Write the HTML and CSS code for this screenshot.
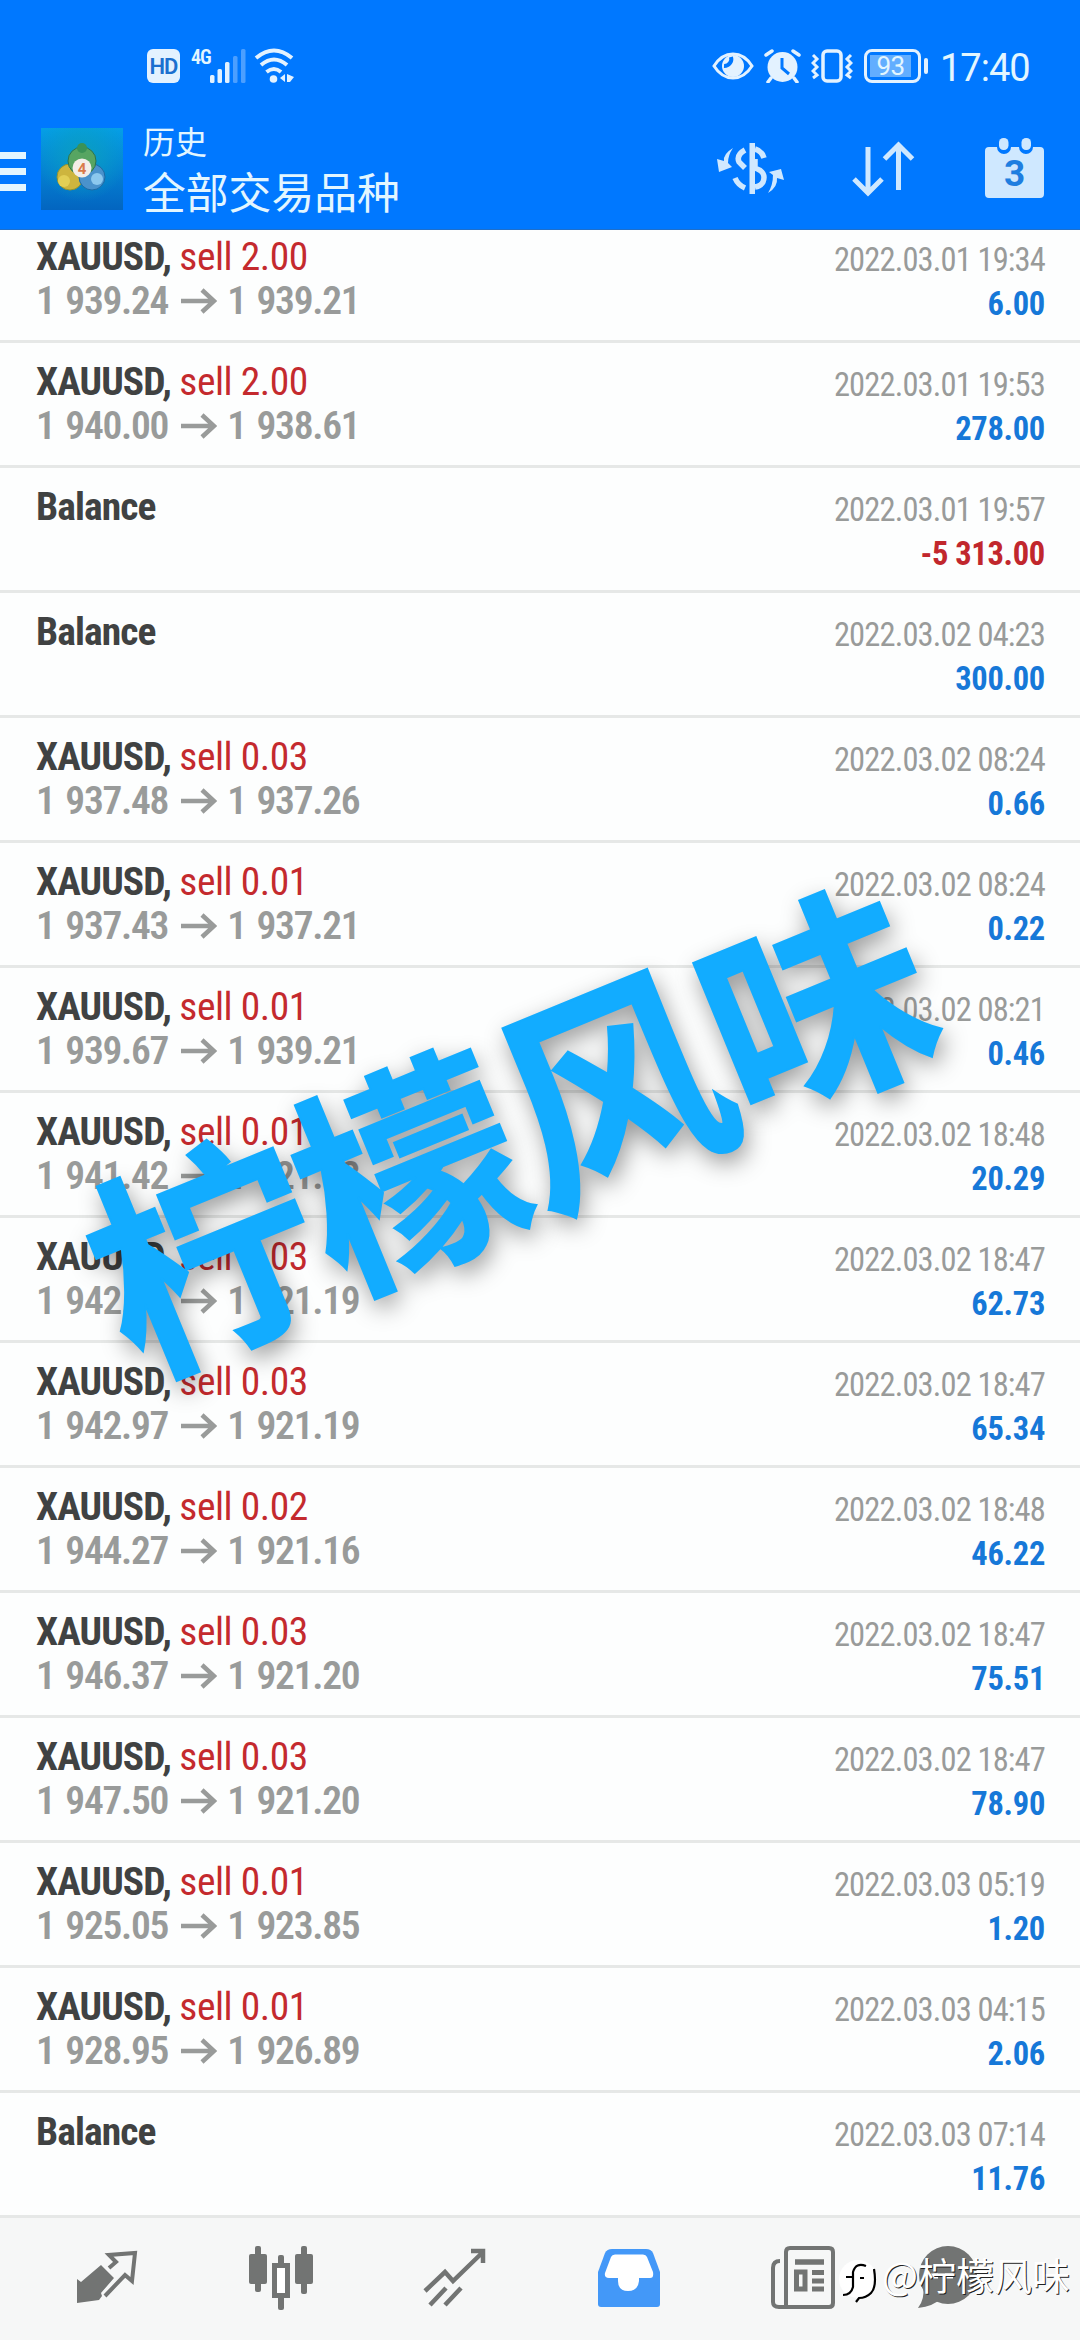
FILE: index.html
```html
<!DOCTYPE html>
<html lang="zh-CN">
<head>
<meta charset="utf-8">
<title>历史</title>
<link rel="stylesheet" href="styles.css">
</head>
<body>
<div class="screen">
  <header class="top">
    <div class="status">
      <div class="status-left">
        <span class="hd">HD</span>
        <span class="net">4G</span>
        <svg class="signal" width="36" height="34" viewBox="0 0 36 34"><g fill="#e3f2ff"><rect x="0" y="26" width="4.500" height="8" rx="1.500"/><rect x="7.500" y="20" width="4.500" height="14" rx="1.500"/><rect x="15" y="13" width="4.500" height="21" rx="1.500"/></g><g fill="#4c9fff"><rect x="23" y="7" width="4.500" height="27" rx="1.500"/><rect x="31" y="0" width="4.500" height="34" rx="1.500"/></g></svg>
        <svg class="wifi" width="42" height="36" viewBox="0 0 42 36"><g fill="none" stroke="#e3f2ff" stroke-width="4"><path d="M2 10Q20 -5 38 10"/><path d="M7 17Q20 6 33 17"/><path d="M12.500 24Q20 18 27 24"/></g><circle cx="19.500" cy="31" r="3.800" fill="#e3f2ff"/><path d="M26 30l5-4v8zM33 26l7 3-4 5h-3z" fill="#e3f2ff"/></svg>
      </div>
      <div class="status-right">
        <svg width="42" height="34" viewBox="0 0 42 34"><path d="M2 17C12 1 30 1 40 17C30 33 12 33 2 17Z" fill="none" stroke="#e3f2ff" stroke-width="3"/><circle cx="21" cy="17" r="11" fill="#e3f2ff"/><path d="M19 8a7 7 0 0 1-7 9" fill="none" stroke="#0078ff" stroke-width="4"/></svg>
        <svg width="37" height="34" viewBox="0 0 37 34"><circle cx="18.500" cy="18" r="15" fill="#e3f2ff"/><path d="M2 6l6-4M35 6l-6-4M7 29l-3 4M30 29l3 4" stroke="#e3f2ff" stroke-width="3.500" stroke-linecap="round"/><path d="M18 9v10l7 6" fill="none" stroke="#0078ff" stroke-width="3"/></svg>
        <svg width="42" height="34" viewBox="0 0 42 34"><rect x="12" y="2" width="18" height="30" rx="4" fill="none" stroke="#e3f2ff" stroke-width="3.500"/><path d="M2 6l4 4-4 4 4 4-4 4 4 4-4 3M40 6l-4 4 4 4-4 4 4 4-4 4 4 3" fill="none" stroke="#e3f2ff" stroke-width="3"/></svg>
        <span class="battery"><span class="level">93</span></span>
        <span class="clock">17:40</span>
      </div>
    </div>
    <div class="bar">
      <div class="burger"><i></i><i></i><i></i></div>
      <svg class="logo" width="82" height="82" viewBox="0 0 82 82">
        <defs>
          <linearGradient id="sea" x1="0" y1="0" x2="0" y2="1"><stop offset="0" stop-color="#059fe6"/><stop offset="1" stop-color="#0365c0"/></linearGradient>
          <radialGradient id="glow" cx=".5" cy=".35" r=".55"><stop offset="0" stop-color="#0a9fc0"/><stop offset="1" stop-color="#0a9fc0" stop-opacity="0"/></radialGradient>
        </defs>
        <rect width="82" height="82" fill="url(#sea)"/><rect width="82" height="82" fill="url(#glow)"/>
        <circle cx="29" cy="49" r="13" fill="#cdb53e" stroke="#8d9434"/><circle cx="51" cy="49" r="13" fill="#4a92cc" stroke="#1c6aa4"/><circle cx="41" cy="33" r="14" fill="#57a562" stroke="#2b7350"/>
        <circle cx="41" cy="20" r="5" fill="#3b9256"/><circle cx="23" cy="53" r="6" fill="#e2cf55"/><circle cx="56" cy="51" r="6" fill="#8cc8ee"/>
        <circle cx="41" cy="40" r="9.500" fill="#f3eee8"/><text x="41" y="45.500" text-anchor="middle" class="logo-num">4</text>
      </svg>
      <div class="titles"><div class="title-small">历史</div><div class="title-big">全部交易品种</div></div>
      <div class="actions">
        <svg class="low" width="70" height="56" viewBox="0 0 70 56"><g fill="#cfe8ff"><path d="M17 7Q7 13 8 20L1 18 3 31 16 26 12 22Q12 14 17 7Z"/><path d="M52 52Q62 46 61 37L68 39 65 28 53 31 57 34Q57 44 52 52Z"/><rect x="33.500" y="2" width="5.500" height="51"/></g><g fill="none" stroke="#cfe8ff" stroke-width="5.500"><path d="M29 9Q20 14 23 21L29 27M19 37Q22 44 29 47M39 8Q46 10 48 17M39 27Q51 31 47 41Q45 45 39 46M39 27V18"/></g></svg>
        <svg class="low" width="66" height="56" viewBox="0 0 66 56"><path d="M17 6v45M3 38l14 14 14-14M47.500 49V5M33.500 18l14-14 14 14" fill="none" stroke="#cfe8ff" stroke-width="5"/></svg>
        <svg width="60" height="62" viewBox="0 0 60 62"><path d="M4 10h8a7 7 0 0 0 14 0h8a7 7 0 0 0 14 0h7a4 4 0 0 1 4 4v43a4 4 0 0 1-4 4H4a4 4 0 0 1-4-4V14a4 4 0 0 1 4-4z" fill="#cfe8ff"/><rect x="14" y="1" width="9.500" height="12" rx="4.500" fill="#cfe8ff"/><rect x="36.500" y="1" width="9.500" height="12" rx="4.500" fill="#cfe8ff"/><text x="29.500" y="49" text-anchor="middle" class="cal-num">3</text></svg>
      </div>
    </div>
  </header>

  <main class="list">
    <article class="row"><div class="deal"><p class="name">XAUUSD, <b>sell 2.00</b></p><p class="price"><span>1 939.24</span><svg class="arrow" viewBox="0 0 36 26"><path d="M0 13h33M21 2l12 11-12 11"/></svg><span>1 939.21</span></p></div><div class="result"><time>2022.03.01 19:34</time><p class="sum">6.00</p></div></article>
    <article class="row"><div class="deal"><p class="name">XAUUSD, <b>sell 2.00</b></p><p class="price"><span>1 940.00</span><svg class="arrow" viewBox="0 0 36 26"><path d="M0 13h33M21 2l12 11-12 11"/></svg><span>1 938.61</span></p></div><div class="result"><time>2022.03.01 19:53</time><p class="sum">278.00</p></div></article>
    <article class="row"><div class="deal"><p class="name">Balance</p></div><div class="result"><time>2022.03.01 19:57</time><p class="sum loss">-5 313.00</p></div></article>
    <article class="row"><div class="deal"><p class="name">Balance</p></div><div class="result"><time>2022.03.02 04:23</time><p class="sum">300.00</p></div></article>
    <article class="row"><div class="deal"><p class="name">XAUUSD, <b>sell 0.03</b></p><p class="price"><span>1 937.48</span><svg class="arrow" viewBox="0 0 36 26"><path d="M0 13h33M21 2l12 11-12 11"/></svg><span>1 937.26</span></p></div><div class="result"><time>2022.03.02 08:24</time><p class="sum">0.66</p></div></article>
    <article class="row"><div class="deal"><p class="name">XAUUSD, <b>sell 0.01</b></p><p class="price"><span>1 937.43</span><svg class="arrow" viewBox="0 0 36 26"><path d="M0 13h33M21 2l12 11-12 11"/></svg><span>1 937.21</span></p></div><div class="result"><time>2022.03.02 08:24</time><p class="sum">0.22</p></div></article>
    <article class="row"><div class="deal"><p class="name">XAUUSD, <b>sell 0.01</b></p><p class="price"><span>1 939.67</span><svg class="arrow" viewBox="0 0 36 26"><path d="M0 13h33M21 2l12 11-12 11"/></svg><span>1 939.21</span></p></div><div class="result"><time>2022.03.02 08:21</time><p class="sum">0.46</p></div></article>
    <article class="row"><div class="deal"><p class="name">XAUUSD, <b>sell 0.01</b></p><p class="price"><span>1 941.42</span><svg class="arrow" viewBox="0 0 36 26"><path d="M0 13h33M21 2l12 11-12 11"/></svg><span>1 921.13</span></p></div><div class="result"><time>2022.03.02 18:48</time><p class="sum">20.29</p></div></article>
    <article class="row"><div class="deal"><p class="name">XAUUSD, <b>sell 0.03</b></p><p class="price"><span>1 942.10</span><svg class="arrow" viewBox="0 0 36 26"><path d="M0 13h33M21 2l12 11-12 11"/></svg><span>1 921.19</span></p></div><div class="result"><time>2022.03.02 18:47</time><p class="sum">62.73</p></div></article>
    <article class="row"><div class="deal"><p class="name">XAUUSD, <b>sell 0.03</b></p><p class="price"><span>1 942.97</span><svg class="arrow" viewBox="0 0 36 26"><path d="M0 13h33M21 2l12 11-12 11"/></svg><span>1 921.19</span></p></div><div class="result"><time>2022.03.02 18:47</time><p class="sum">65.34</p></div></article>
    <article class="row"><div class="deal"><p class="name">XAUUSD, <b>sell 0.02</b></p><p class="price"><span>1 944.27</span><svg class="arrow" viewBox="0 0 36 26"><path d="M0 13h33M21 2l12 11-12 11"/></svg><span>1 921.16</span></p></div><div class="result"><time>2022.03.02 18:48</time><p class="sum">46.22</p></div></article>
    <article class="row"><div class="deal"><p class="name">XAUUSD, <b>sell 0.03</b></p><p class="price"><span>1 946.37</span><svg class="arrow" viewBox="0 0 36 26"><path d="M0 13h33M21 2l12 11-12 11"/></svg><span>1 921.20</span></p></div><div class="result"><time>2022.03.02 18:47</time><p class="sum">75.51</p></div></article>
    <article class="row"><div class="deal"><p class="name">XAUUSD, <b>sell 0.03</b></p><p class="price"><span>1 947.50</span><svg class="arrow" viewBox="0 0 36 26"><path d="M0 13h33M21 2l12 11-12 11"/></svg><span>1 921.20</span></p></div><div class="result"><time>2022.03.02 18:47</time><p class="sum">78.90</p></div></article>
    <article class="row"><div class="deal"><p class="name">XAUUSD, <b>sell 0.01</b></p><p class="price"><span>1 925.05</span><svg class="arrow" viewBox="0 0 36 26"><path d="M0 13h33M21 2l12 11-12 11"/></svg><span>1 923.85</span></p></div><div class="result"><time>2022.03.03 05:19</time><p class="sum">1.20</p></div></article>
    <article class="row"><div class="deal"><p class="name">XAUUSD, <b>sell 0.01</b></p><p class="price"><span>1 928.95</span><svg class="arrow" viewBox="0 0 36 26"><path d="M0 13h33M21 2l12 11-12 11"/></svg><span>1 926.89</span></p></div><div class="result"><time>2022.03.03 04:15</time><p class="sum">2.06</p></div></article>
    <article class="row"><div class="deal"><p class="name">Balance</p></div><div class="result"><time>2022.03.03 07:14</time><p class="sum">11.76</p></div></article>
  </main>

  <nav class="tabs">
    <svg width="66" height="66" viewBox="0 0 66 66"><path d="M27 20L40 33 27 48 28 51 25 55 3 58V34L7 37Z" fill="#727473"/><path d="M35 23L42 17 35 10 61 8 58 36 51 30 31 51" fill="none" stroke="#f6f7f7" stroke-width="9"/><path d="M35 23L42 17 35 10 61 8 58 36 51 30 31 51" fill="none" stroke="#727473" stroke-width="4"/></svg>
    <svg width="66" height="66" viewBox="0 0 66 66"><g fill="#727473"><rect x="1" y="9" width="18" height="30" rx="2"/><rect x="7" y="1" width="6" height="46" rx="2"/><rect x="47" y="9" width="18" height="30" rx="2"/><rect x="53" y="1" width="6" height="48" rx="2"/><rect x="30" y="10" width="6" height="10" rx="2"/><rect x="30" y="50" width="6" height="15" rx="2"/></g><rect x="26.500" y="20.500" width="13" height="30" fill="#fff" stroke="#727473" stroke-width="5"/></svg>
    <svg width="66" height="66" viewBox="0 0 66 66"><path d="M3 46L23 27 31 36 61 7M49 6H61V18M8 60L24 43M23 60L39 43" fill="none" stroke="#727473" stroke-width="4.500"/></svg>
    <svg width="66" height="66" viewBox="0 0 66 66"><path d="M16 4H50Q55 4 57 8L64 27V59Q64 62 61 62H5Q2 62 2 59V27L9 8Q11 4 16 4Z" fill="#4398f8"/><path d="M19 9.500H47Q50 9.500 51 12L57 27Q58 33 54 33H43V36Q42 46 32 46Q22 46 22 36V33H13Q8 33 9 28L15 12Q16 9.500 19 9.500Z" fill="#fff"/></svg>
    <svg width="66" height="66" viewBox="0 0 66 66"><g fill="none" stroke="#727473" stroke-width="4"><path d="M10 16Q3 16 3 23V57Q3 62 9 62H59Q63 62 63 58V7Q63 3 59 3H20Q16 3 16 7V61"/><path d="M25 17H54" stroke-width="5.500"/><path d="M42 27.500H54M42 36H54M42 44H54" stroke-width="5"/><rect x="26.500" y="27" width="8.500" height="17" stroke-width="5"/></g></svg>
    <svg class="chat" width="66" height="66" viewBox="0 0 66 66"><ellipse cx="32" cy="30" rx="29" ry="29" fill="#727473"/><path d="M7 42Q9 54 2 63Q18 61 24 54Z" fill="#727473"/><path d="M15 31h7M29 31h8" stroke="#fff" stroke-width="5"/></svg>
  </nav>

  <div class="stamp">柠檬风味</div>
  <div class="credit">
    <svg width="40" height="50" viewBox="0 0 40 50"><circle cx="20" cy="22" r="19" fill="#fff"/><path d="M28 9Q18 5 15 15V30Q13 38 5 38M8 20H15M22 21h4M36 12Q39 30 33 36Q28 41 21 41L18 45" fill="none" stroke="#000" stroke-width="2.200"/></svg>
    <span>@柠檬风味</span>
  </div>
</div>
</body>
</html>
```
FILE: styles.css
```css
* { box-sizing: border-box; margin: 0; padding: 0; }
body { background: #fdfefe; font-family: "Roboto Condensed", "Noto Sans CJK SC", sans-serif; }
svg { display: block; flex: none; }
.screen { position: relative; width: 1080px; height: 2340px; overflow: hidden; display: flex; flex-direction: column; background: #fdfefe; }

.top { height: 230px; flex: none; background: #0078ff; color: #e3f6ff; border-bottom: 1px solid #1f6fca; }
.status { height: 118px; padding: 49px 52px 0 147px; display: flex; justify-content: space-between; align-items: flex-start; }
.status-left, .status-right { display: flex; align-items: flex-start; }
.hd { width: 33px; height: 34px; border-radius: 6px; background: #e3f2ff; color: #1b70cf; font: 600 22px/35px Roboto, sans-serif; text-align: center; letter-spacing: -1px; }
.net { width: 18px; margin-left: 11px; font: 600 20px/17px "Roboto Condensed", sans-serif; letter-spacing: -1px; }
.signal { margin-left: 1px; }
.wifi { margin-left: 8px; margin-top: -1px; }
.status-right { gap: 10px; }
.battery { position: relative; width: 57px; height: 34px; border: 3px solid #e3f2ff; border-radius: 8px; padding: 3px; margin-left: 1px; }
.battery::after { content: ""; position: absolute; right: -10px; top: 6px; width: 4px; height: 16px; border-radius: 2px; background: #e3f2ff; }
.level { display: block; width: 41px; height: 22px; background: #62aeff; font: 400 26px/23px Roboto, sans-serif; text-align: center; letter-spacing: -.5px; }
.clock { width: 88px; margin-left: 9px; font: 400 38px/39px Roboto, sans-serif; letter-spacing: -1px; }

.bar { height: 111px; display: flex; align-items: flex-start; }
.burger { width: 26px; padding-top: 34px; display: flex; flex-direction: column; gap: 9px; }
.burger i { height: 7px; background: #e3f6ff; }
.logo { margin: 10px 0 0 15px; }
.logo-num { font: 700 15px Roboto, sans-serif; fill: #d97a4a; }
.titles { margin: 2px 0 0 20px; font-family: "Noto Sans CJK SC", sans-serif; white-space: nowrap; }
.title-small { font-size: 32px; line-height: 40px; }
.title-big { font-size: 42.8px; line-height: 60px; }
.actions { margin: 19px 35px 0 auto; display: flex; gap: 65px; }
.low { margin-top: 4px; }
.low:nth-child(2) { margin-right: 3px; }
.cal-num { font: 700 37px Roboto, sans-serif; fill: #1f7ee0; }

.list { height: 1988px; flex: none; overflow: hidden; }
.row { height: 125px; border-bottom: 3px solid #e6e8e7; padding: 0 35px 0 36px; display: flex; justify-content: space-between; }
.row:first-child { margin-top: -12px; }
.deal { padding-top: 17px; font-size: 39.5px; line-height: 44px; white-space: nowrap; }
.name { font-weight: 700; color: #404242; letter-spacing: -.9px; }
.name b { font-weight: 400; color: #c42a2e; letter-spacing: -.45px; }
.price { font-weight: 600; color: #999b9a; display: flex; align-items: center; gap: 13px; letter-spacing: -1.3px; word-spacing: 3px; }
.arrow { width: 36px; height: 26px; margin-right: -3px; fill: none; stroke: #999b9a; stroke-width: 4.5; }
.result { padding-top: 20px; font-size: 32.5px; line-height: 44px; text-align: right; white-space: nowrap; }
.result time { display: block; color: #999b9a; letter-spacing: -.85px; }
.sum { font-weight: 700; color: #1678d8; letter-spacing: -.3px; }
.sum.loss { color: #c1272d; }

.tabs { flex: 1; background: #f6f7f7; padding: 27px 0 0 74px; display: flex; gap: 108px; }
.chat { margin-left: -28px; }

.stamp { position: absolute; left: 65px; top: 970px; font: 700 224px/300px "Noto Sans CJK SC", sans-serif; letter-spacing: -4px; color: #12acff; -webkit-text-stroke: 2px #12acff; white-space: nowrap; transform: rotate(-22.3deg); text-shadow: 0 10px 24px rgba(0,0,0,.42); }
.credit { position: absolute; left: 838px; top: 2241px; display: flex; align-items: center; gap: 4px; color: #fff; font: 400 38px/56px "Noto Sans CJK SC", sans-serif; white-space: nowrap; text-shadow: 1px 1px 0 #222; }
.credit svg { margin-top: 16px; }
```
